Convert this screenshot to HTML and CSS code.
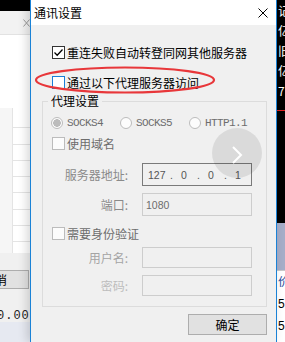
FILE: index.html
```html
<!doctype html>
<html lang="zh-CN">
<head>
    <meta charset="UTF-8">
    <title>通讯设置</title>
    <link rel="stylesheet" href="styles.css">
</head>
<body>
<div class="desktop">
    <!-- 后面的主窗口（左侧） -->
    <div class="app-left">
        <div class="topbar"></div>
        <div class="tabbar">
            <svg class="tab-close" width="7" height="8" viewBox="0 0 7 8"><path d="M0.5 0.5 L6.5 7.5 M6.5 0.5 L0.5 7.5" stroke="#9a9a9a" stroke-width="1" fill="none"/></svg>
        </div>
        <div class="sheet"></div>
        <div class="left-foot">
            <button class="btn-cancel">取消</button>
            <div class="amount">0.00</div>
        </div>
    </div>

    <!-- 后面的行情窗口（右侧） -->
    <div class="app-right">
        <div class="quote-dark">
            <span>记</span><span>亿</span><span>旧</span><span>亿</span><span>7</span>
            <div class="red-line"></div>
        </div>
        <div class="quote-blue"></div>
        <div class="quote-list">
            <span class="q-head">价</span><span>5</span><span>5</span>
        </div>
    </div>

    <!-- 通讯设置对话框 -->
    <div class="dialog">
        <div class="titlebar">
            <span class="title">通讯设置</span>
            <svg class="close" width="10" height="10" viewBox="0 0 10 10"><path d="M0.5 0.5 L9.5 9.5 M9.5 0.5 L0.5 9.5" stroke="#000" stroke-width="1" fill="none"/></svg>
        </div>
        <div class="dlg-body">
            <label class="check-row row-retry">
                <span class="box"><svg width="11" height="11" viewBox="0 0 11 11"><path d="M1.5 5.5 L4.2 8.2 L9.5 2.5" stroke="#000" stroke-width="1.3" fill="none"/></svg></span>
                重连失败自动转登同网其他服务器
            </label>
            <label class="check-row row-proxy">
                <span class="box box-focus"></span>
                通过以下代理服务器访问
            </label>

            <fieldset class="group">
                <legend>代理设置</legend>
                <div class="radios">
                    <span class="radio"><span class="dot dot-on"></span>SOCKS4</span>
                    <span class="radio"><span class="dot"></span>SOCKS5</span>
                    <span class="radio"><span class="dot"></span>HTTP1.1</span>
                </div>
                <label class="check-row off row-domain"><span class="box box-off"></span>使用域名</label>

                <div class="field row-server">
                    <span class="f-label">服务器地址:</span>
                    <span class="f-input ip">
                        <span class="ip-a">127</span><span class="ip-dot">.</span><span class="ip-n">0</span><span class="ip-dot">.</span><span class="ip-n">0</span><span class="ip-dot">.</span><span class="ip-n">1</span>
                    </span>
                </div>
                <div class="field row-port">
                    <span class="f-label">端口:</span>
                    <span class="f-input soft">1080</span>
                </div>

                <label class="check-row off row-auth"><span class="box box-off"></span>需要身份验证</label>

                <div class="field row-user">
                    <span class="f-label faint">用户名:</span>
                    <span class="f-input soft"></span>
                </div>
                <div class="field row-pass">
                    <span class="f-label fainter">密码:</span>
                    <span class="f-input soft"></span>
                </div>
            </fieldset>

            <div class="actions">
                <button class="btn-ok">确定</button>
            </div>
        </div>
    </div>

    <!-- 标注的红圈 -->
    <svg class="mark" width="186" height="32" viewBox="0 0 186 32">
        <ellipse cx="92" cy="16" rx="89" ry="12.5" stroke="#e8373a" stroke-width="2.2" fill="none"/>
    </svg>

    <!-- 悬浮翻页按钮 -->
    <div class="pager">
        <svg width="12" height="18" viewBox="0 0 12 18"><path d="M2 1 L10 9 L2 17" stroke="#fff" stroke-width="2" fill="none"/></svg>
    </div>
</div>
</body>
</html>
```

FILE: styles.css
```css
*{
    margin: 0;
    padding: 0;
    box-sizing: border-box;
}
body{
    width: 285px;
    height: 342px;
    overflow: hidden;
    font-family: "Noto Sans CJK SC", sans-serif;
    font-size: 12px;
    color: #000;
}
.desktop{
    position: relative;
    width: 285px;
    height: 342px;
    overflow: hidden;
    background: #f0f0f0;
}

/* 左侧主窗口 */
.app-left{
    position: absolute;
    left: 0;
    top: 0;
    width: 30px;
    height: 342px;
    display: flex;
    flex-direction: column;
    background: #f0f0f0;
}
.topbar{
    height: 12px;
    background: #000;
}
.tabbar{
    height: 25px;
    background: #f2f2f2;
    display: flex;
    align-items: center;
    padding-left: 23px;
    border-bottom: 1px solid #e2e2e2;
}
.sheet{
    height: 228px;
    background-color: #fff;
    background-image:
        linear-gradient(90deg, #f6f6f6 0, #f6f6f6 12px, #e4e4e4 12px, #e4e4e4 13px, transparent 13px),
        repeating-linear-gradient(180deg, transparent 0, transparent 15.3px, #e4e4e4 15.3px, #e4e4e4 16.3px);
    background-size: 100% 155px, 100% 155px;
    background-position: 0 73px, 0 77px;
    background-repeat: no-repeat;
}
.left-foot{
    flex: 1;
    background: #f0f0f0;
    padding-top: 17px;
    position: relative;
}
.btn-cancel{
    display: block;
    margin-left: -41px;
    width: 70px;
    height: 19px;
    border: 1px solid #adadad;
    background: #e1e1e1;
    font-family: "Noto Sans CJK SC", sans-serif;
    font-size: 12px;
    text-align: right;
    padding-right: 21px;
    line-height: 16px;
}
.amount{
    margin-top: 21px;
    margin-left: -3px;
    font-family: "Liberation Mono", monospace;
    font-size: 12px;
    line-height: 12px;
    color: #222;
    letter-spacing: 1px;
}
.left-foot::after{
    content: "";
    display: block;
    height: 20px;
    background: #e6e9f1;
}

/* 右侧行情窗口 */
.app-right{
    position: absolute;
    left: 277px;
    top: 0;
    width: 8px;
    height: 342px;
    display: flex;
    flex-direction: column;
}
.quote-dark{
    height: 223px;
    background: #000;
    color: #fff;
    display: flex;
    flex-direction: column;
    padding-top: 5px;
    gap: 8px;
    font-size: 12px;
    line-height: 12px;
    position: relative;
    overflow: hidden;
}
.quote-dark span{
    margin-left: 1px;
}
.red-line{
    position: absolute;
    left: 0;
    top: 110px;
    width: 8px;
    height: 1px;
    background: #e02020;
}
.quote-blue{
    height: 47px;
    background: #a6adc8;
}
.quote-list{
    flex: 1;
    background: #fff;
    border-top: 1px solid #c8c8c8;
    display: flex;
    flex-direction: column;
    padding-top: 5px;
    gap: 10px;
    line-height: 12px;
    overflow: hidden;
}
.quote-list span{
    margin-left: 1px;
    font-family: "Liberation Sans", sans-serif;
}
.q-head{
    color: #2b4d9a;
}

/* 对话框 */
.dialog{
    position: absolute;
    left: 30px;
    top: 0;
    width: 247px;
    height: 342px;
    background: #f0f0f0;
    border-left: 1px solid #1a82d6;
    border-right: 1px solid #1a82d6;
    box-shadow: -3px 0 9px rgba(0, 0, 0, 0.16);
}
.titlebar{
    height: 25px;
    background: #fff;
    display: flex;
    align-items: center;
    justify-content: space-between;
    padding: 1px 8px 0 3px;
}
.title{
    line-height: 14px;
}
.dlg-body{
    padding: 0 9px 0 11px;
}
.check-row{
    display: flex;
    align-items: center;
    gap: 2px;
    height: 13px;
    line-height: 13px;
    white-space: nowrap;
}
.row-retry{
    margin-top: 21px;
    padding-left: 10px;
}
.row-proxy{
    margin-top: 17px;
    padding-left: 10px;
}
.box{
    width: 13px;
    height: 13px;
    border: 1px solid #333;
    background: #fff;
    display: flex;
    align-items: center;
    justify-content: center;
    flex: none;
}
.box-focus{
    border-color: #1a7fd8;
}
.box-off{
    border-color: #bcbcbc;
    background: #fcfcfc;
}
.check-row.off{
    color: #6d6d6d;
}

.group{
    margin-top: 5px;
    border: 1px solid #dcdcdc;
    padding: 0 0 10px 9px;
}
.group legend{
    margin-left: -4px;
    padding: 0 3px;
    line-height: 14px;
}
.radios{
    margin-top: 9px;
    margin-left: -1px;
    display: flex;
    height: 12px;
}
.radio{
    width: 69px;
    display: flex;
    align-items: center;
    gap: 4px;
    font-family: "Liberation Mono", monospace;
    font-size: 11px;
    letter-spacing: -0.6px;
    line-height: 12px;
    color: #6d6d6d;
}
.dot{
    width: 12px;
    height: 12px;
    border-radius: 50%;
    border: 1px solid #bcbcbc;
    background: #fcfcfc;
    flex: none;
}
.dot-on{
    background: #fcfcfc radial-gradient(circle, #bcbcbc 0, #bcbcbc 3.6px, transparent 4px);
}
.row-domain{
    margin-top: 8px;
}
.row-auth{
    margin-top: 11px;
}

.field{
    display: grid;
    grid-template-columns: 76px 110px;
    column-gap: 14px;
    align-items: center;
}
.f-label{
    text-align: right;
    color: #8a8a8a;
    white-space: nowrap;
}
.f-label.faint{
    color: #a4a4a4;
}
.f-label.fainter{
    color: #bdbdbd;
}
.f-input{
    height: 23px;
    border: 1px solid #7a7a7a;
    background: #f0f0f0;
    display: flex;
    align-items: center;
    font-family: "Liberation Sans", sans-serif;
    font-size: 10.5px;
    color: #6d6d6d;
    padding-left: 3px;
}
.f-input.soft{
    border-color: #cdcdcd;
}
.ip{
    color: #555;
    padding-left: 5px;
}
.ip-a{
    width: 22px;
}
.ip-dot{
    width: 11px;
}
.ip-n{
    width: 16px;
}
.row-server{
    margin-top: 13px;
}
.row-port{
    margin-top: 7px;
}
.row-user{
    margin-top: 7px;
}
.row-user .f-input,
.row-pass .f-input{
    height: 21px;
}
.row-pass{
    margin-top: 7px;
}

.actions{
    margin-top: 7px;
    display: flex;
    justify-content: flex-end;
}
.btn-ok{
    width: 79px;
    height: 21px;
    border: 1px solid #adadad;
    background: #e1e1e1;
    font-family: "Noto Sans CJK SC", sans-serif;
    font-size: 12px;
    line-height: 18px;
}

/* 叠在上面的东西 */
.mark{
    position: absolute;
    left: 33px;
    top: 64px;
}
.pager{
    position: absolute;
    left: 212px;
    top: 128px;
    width: 50px;
    height: 50px;
    border-radius: 50%;
    background: rgba(0, 0, 0, 0.09);
    display: flex;
    align-items: center;
    justify-content: center;
    padding-top: 4px;
}
```
